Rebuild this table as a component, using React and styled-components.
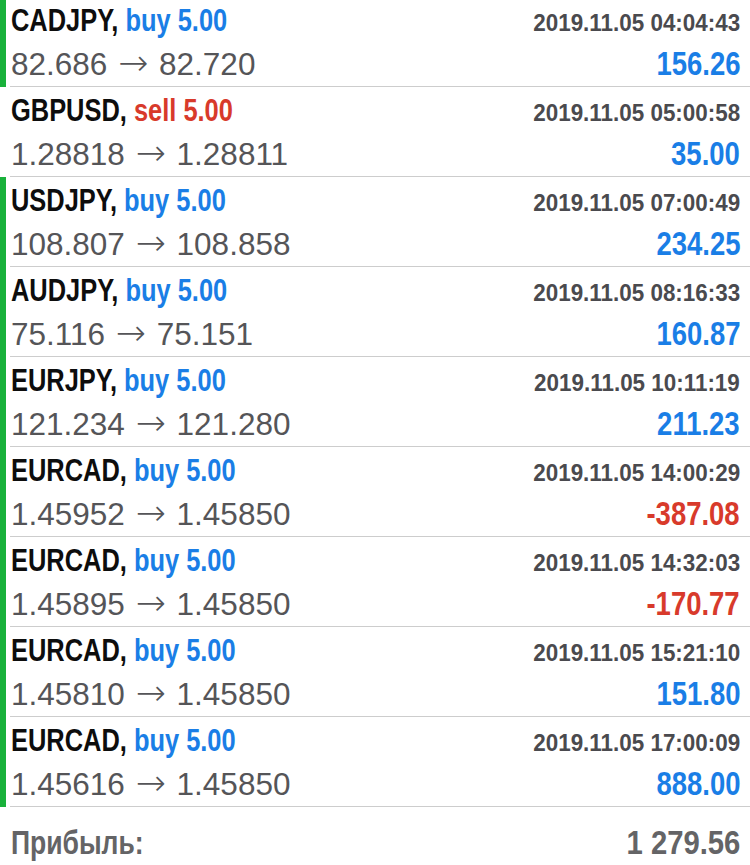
import React from "react";
import styled, { createGlobalStyle } from "styled-components";

const deals = [
  { symbol: "CADJPY", side: "buy", volume: "5.00", time: "2019.11.05 04:04:43", open: "82.686", close: "82.720", profit: "156.26", mark: true },
  { symbol: "GBPUSD", side: "sell", volume: "5.00", time: "2019.11.05 05:00:58", open: "1.28818", close: "1.28811", profit: "35.00", mark: false },
  { symbol: "USDJPY", side: "buy", volume: "5.00", time: "2019.11.05 07:00:49", open: "108.807", close: "108.858", profit: "234.25", mark: true },
  { symbol: "AUDJPY", side: "buy", volume: "5.00", time: "2019.11.05 08:16:33", open: "75.116", close: "75.151", profit: "160.87", mark: true },
  { symbol: "EURJPY", side: "buy", volume: "5.00", time: "2019.11.05 10:11:19", open: "121.234", close: "121.280", profit: "211.23", mark: true },
  { symbol: "EURCAD", side: "buy", volume: "5.00", time: "2019.11.05 14:00:29", open: "1.45952", close: "1.45850", profit: "-387.08", mark: true },
  { symbol: "EURCAD", side: "buy", volume: "5.00", time: "2019.11.05 14:32:03", open: "1.45895", close: "1.45850", profit: "-170.77", mark: true },
  { symbol: "EURCAD", side: "buy", volume: "5.00", time: "2019.11.05 15:21:10", open: "1.45810", close: "1.45850", profit: "151.80", mark: true },
  { symbol: "EURCAD", side: "buy", volume: "5.00", time: "2019.11.05 17:00:09", open: "1.45616", close: "1.45850", profit: "888.00", mark: true },
];

const BLUE = "#1a7ee6";
const RED = "#d83a2b";

const GlobalStyle = createGlobalStyle`
  html, body {
    margin: 0;
    padding: 0;
    background: #fff;
    overflow: hidden;
  }
  body {
    font-family: "Liberation Sans", Arial, sans-serif;
  }
`;

const Screen = styled.div`
  width: 750px;
  height: 865px;
  overflow: hidden;
  background: #fff;
`;

const List = styled.div`
  margin-top: -3px;
`;

const Row = styled.div`
  display: flex;
  align-items: stretch;
`;

const Accent = styled.div`
  width: 6px;
  flex: none;
  background: ${(p) => (p.$on ? "#19b13b" : "transparent")};
`;

const Body = styled.div`
  flex: 1;
  margin-left: 4px;
  padding: 2px 10px 3px 1px;
  border-bottom: 1px solid #cdcdcd;
`;

const Line = styled.div`
  display: flex;
  justify-content: space-between;
  align-items: baseline;
  height: ${(p) => p.$h}px;
  line-height: ${(p) => p.$h}px;
`;

/* condensed bold face: no narrow font is installed, so squeeze horizontally */
const Condensed = styled.span`
  display: inline-block;
  font-family: "Liberation Sans", Arial, sans-serif;
  font-weight: 700;
  white-space: nowrap;
  transform: scaleX(${(p) => p.$sx || 0.82});
  transform-origin: ${(p) => (p.$right ? "right" : "left")} center;
`;

const Title = styled(Condensed)`
  font-size: 31px;
  color: #0d0d0d;
`;

const Side = styled.span`
  color: ${(p) => (p.$sell ? RED : BLUE)};
`;

const Time = styled(Condensed)`
  font-size: 24.5px;
  color: #4a4a4e;
`;

const Prices = styled.div`
  font-family: "Liberation Sans", Arial, sans-serif;
  font-size: 31.5px;
  color: #555558;
  white-space: nowrap;
`;

const Arrow = styled.span`
  font-family: "DejaVu Sans", sans-serif;
  font-weight: 200;
  font-size: 36px;
  margin: 0 2px;
`;

const Profit = styled(Condensed)`
  font-size: 33.5px;
  color: ${(p) => (p.$loss ? RED : BLUE)};
`;

const Footer = styled.div`
  display: flex;
  justify-content: space-between;
  align-items: baseline;
  padding: 15px 10px 0 11px;
  line-height: 40px;
`;

const Total = styled(Condensed)`
  font-size: 34px;
  color: #646466;
`;

const DealRow = ({ deal }) => (
  <Row>
    <Accent $on={deal.mark} />
    <Body>
      <Line $h={44}>
        <Title>
          {deal.symbol}, <Side $sell={deal.side === "sell"}>{deal.side} {deal.volume}</Side>
        </Title>
        <Time $right $sx={0.915}>{deal.time}</Time>
      </Line>
      <Line $h={40}>
        <Prices>
          {deal.open} <Arrow>→</Arrow> {deal.close}
        </Prices>
        <Profit $right $loss={deal.profit.startsWith("-")}>{deal.profit}</Profit>
      </Line>
    </Body>
  </Row>
);

export default function App() {
  return (
    <>
      <GlobalStyle />
      <Screen>
        <List>
          {deals.map((d, i) => (
            <DealRow key={i} deal={d} />
          ))}
        </List>
        <Footer>
          <Total $sx={0.78}>Прибыль:</Total>
          <Total $right $sx={0.86}>1 279.56</Total>
        </Footer>
      </Screen>
    </>
  );
}
